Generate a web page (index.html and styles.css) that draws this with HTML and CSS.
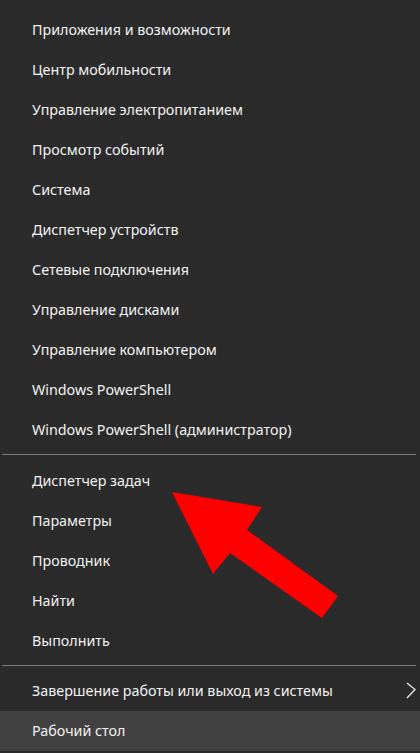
FILE: index.html
```html
<!DOCTYPE html>
<html>
<head>
    <title>Win+X menu</title>
    <link rel="stylesheet" href="styles.css">
</head>
<body>
    <div class="menu">
        <ul class="menu-group first">
            <li class="menu-item">Приложения и возможности</li>
            <li class="menu-item">Центр мобильности</li>
            <li class="menu-item">Управление электропитанием</li>
            <li class="menu-item">Просмотр событий</li>
            <li class="menu-item">Система</li>
            <li class="menu-item">Диспетчер устройств</li>
            <li class="menu-item">Сетевые подключения</li>
            <li class="menu-item">Управление дисками</li>
            <li class="menu-item">Управление компьютером</li>
            <li class="menu-item">Windows PowerShell</li>
            <li class="menu-item">Windows PowerShell (администратор)</li>
        </ul>
        <div class="separator"></div>
        <ul class="menu-group">
            <li class="menu-item">Диспетчер задач</li>
            <li class="menu-item">Параметры</li>
            <li class="menu-item">Проводник</li>
            <li class="menu-item">Найти</li>
            <li class="menu-item">Выполнить</li>
        </ul>
        <div class="separator last"></div>
        <ul class="menu-group">
            <li class="menu-item has-sub">
                Завершение работы или выход из системы
                <svg class="chevron" width="10" height="18" viewBox="0 0 10 18">
                    <polyline points="1,1 9,7.5 1,16" fill="none" stroke="#e6e6e6" stroke-width="1.4"/>
                </svg>
            </li>
            <li class="menu-item active">Рабочий стол</li>
        </ul>

        <!-- red pointer drawn over the menu -->
        <svg class="pointer" width="420" height="753" viewBox="0 0 420 753">
            <polygon points="172,492 262,507 247,530 338,596 322,618 230,553 213,574" fill="#ff0000"/>
        </svg>
    </div>
</body>
</html>
```

FILE: styles.css
```css
:root {
    --menu-bg: #2b2b2b;
    --active-bg: #414141;
    --text-color: #f2f2f2;
    --line-color: #7c7c7c;
}
html, body {
    margin: 0;
    padding: 0;
    background-color: var(--menu-bg);
}
body {
    font-family: "Noto Sans", "Open Sans", sans-serif;
    color: var(--text-color);
}
.menu {
    position: relative;
    width: 420px;
    height: 753px;
    overflow: hidden;
}
.menu-group {
    list-style: none;
    margin: 0;
    padding: 0;
}
.menu-group.first {
    padding-top: 10px;
}
.menu-item {
    display: flex;
    align-items: center;
    height: 40px;
    padding-left: 32px;
    padding-bottom: 1px;
    box-sizing: border-box;
    font-size: 14.3px;
    white-space: nowrap;
}
.menu-item.active {
    background-color: var(--active-bg);
}
.has-sub {
    position: relative;
}
.chevron {
    position: absolute;
    right: 4px;
    top: 11px;
}
.separator {
    height: 1px;
    margin: 4px 4px 6px 2px;
    background-color: var(--line-color);
}
.separator.last {
    margin-bottom: 5px;
}
.pointer {
    position: absolute;
    left: 0;
    top: 0;
    pointer-events: none;
}
```
